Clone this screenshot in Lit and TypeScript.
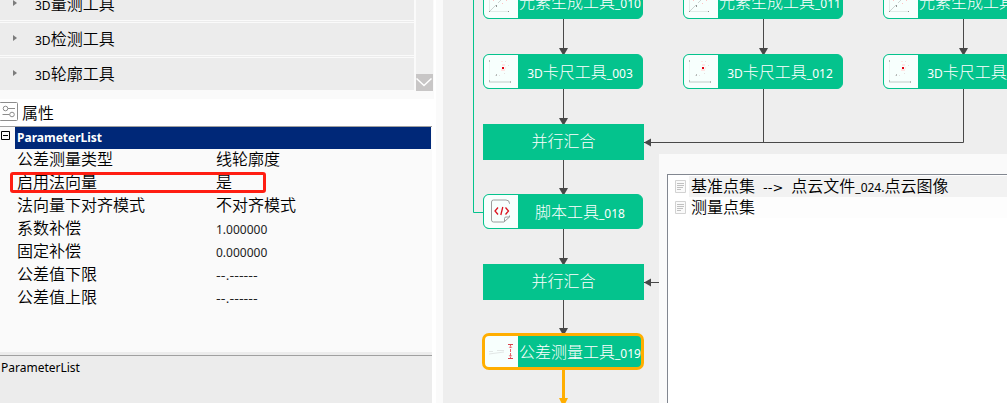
import { LitElement, html, css, svg } from "lit";
import { customElement, property } from "lit/decorators.js";
import { classMap } from "lit/directives/class-map.js";
import { styleMap } from "lit/directives/style-map.js";

/** Sets Latin runs in the smaller UI face, next to full-size Chinese text. */
const mixed = (text: string) =>
  text
    .split(/([\x21-\x7e]+)/)
    .filter((part) => part.trim() !== "")
    .map((part) =>
      /^[-.>]+$/.test(part) && part.length > 1
        ? html`<span class="latin dashes">${part}</span>`
        : /^[\x21-\x7e]/.test(part)
          ? html`<span class="latin">${part}</span>`
          : html`<span>${part}</span>`,
    );

const textStyles = css`
  :host,
  *,
  *::after {
    box-sizing: border-box;
  }
  .latin {
    font-family: "Noto Sans", sans-serif;
    font-size: 12px;
    font-weight: 400;
    line-height: 16px;
  }
  .dashes {
    font-family: "DejaVu Sans", sans-serif;
    font-size: 13px;
  }
`;

const pointIcon = svg`
  <path d="M5.500 6v21" stroke="#f0f6f4" />
  <path d="M5 27h21" stroke="#dce5e2" stroke-width="2" />
  <g fill="#b4bab8">
    <rect x="5" y="5" width="1" height="2" /><rect x="5" y="25" width="1" height="2" />
    <rect x="12" y="19" width="1" height="2" /><rect x="26" y="26" width="1" height="2" />
  </g>
  <g fill="#e4e2e1">
    <rect x="11" y="20" width="1" height="1" /><rect x="15" y="20" width="1" height="1" />
    <rect x="20" y="18" width="1" height="1" /><rect x="24" y="10" width="1" height="1" />
    <rect x="21" y="6" width="1" height="1" />
  </g>
  <g fill="#ffe4e4">
    <rect x="17" y="6" width="2" height="1" /><rect x="18" y="9" width="3" height="2" />
    <rect x="17" y="14" width="4" height="2" /><rect x="21" y="12" width="1" height="2" />
  </g>
  <rect x="18" y="12" width="2" height="2" fill="#e60012" />`;

const elementIcon = svg`
  <path d="M5.500 8v18M6 26.500h19" stroke="#e2ebe8" />
  <path d="M6 26l6-6M14 18l6-6" stroke="#ccd4d2" />
  <g fill="#8f9593">
    <rect x="12" y="20" width="1" height="2" /><rect x="24" y="26" width="1" height="1" />
    <rect x="5" y="26" width="1" height="1" />
  </g>
  <g fill="#ffc4c4">
    <rect x="9" y="15" width="1" height="1" /><rect x="18" y="18" width="1" height="1" />
    <rect x="22" y="15" width="1" height="1" />
  </g>`;

const scriptIcon = svg`
  <path d="M25.500 9V8.500q0-3.500-3.500-3.500H9.500a2 2 0 0 0-2 2v18a2 2 0 0 0 2 2H20l5.500-5V20.500M20.500 27v-3.500q0-1.500 1.500-1.500h3.500"
    fill="none" stroke="#9b9d9d" />
  <path d="M14 12.500l-3 3.500 3 3.500M21.500 12.500l3 3.500-3 3.500M18.800 12l-2 8" fill="none" stroke="#dc1420" stroke-width="1.300" />`;

const toleranceIcon = svg`
  <path d="M5 19l15-2M5 16.500h4M13 15.500h7" stroke="#e2e7e6" />
  <path d="M24 9.500h5M24 23.500h5" stroke="#d9434c" />
  <path d="M26.500 10v13" stroke="#e8606a" stroke-dasharray="3 1" />
  <path d="M25 13l1.500-2 1.500 2M25 20l1.500 2 1.500-2" fill="none" stroke="#f09aa0" />`;

const icons = {
  point: pointIcon,
  element: elementIcon,
  script: scriptIcon,
  tolerance: toleranceIcon,
};

interface FlowNodeData {
  x: number;
  y: number;
  label: string;
  icon?: keyof typeof icons;
  active?: boolean;
}

const nodes: FlowNodeData[] = [
  { x: 40, y: -16, label: "元素生成工具_010", icon: "element" },
  { x: 240, y: -16, label: "元素生成工具_011", icon: "element" },
  { x: 440, y: -16, label: "元素生成工具_012", icon: "element" },
  { x: 40, y: 54, label: "3D卡尺工具_003", icon: "point" },
  { x: 240, y: 54, label: "3D卡尺工具_012", icon: "point" },
  { x: 440, y: 54, label: "3D卡尺工具_013", icon: "point" },
  { x: 40, y: 124, label: "并行汇合" },
  { x: 40, y: 194, label: "脚本工具_018", icon: "script" },
  { x: 40, y: 264, label: "并行汇合" },
  { x: 40, y: 334, label: "公差测量工具_019", icon: "tolerance", active: true },
];

/** Tips of the downward arrows. */
const arrows = [
  [120, 54], [320, 54], [520, 54], [120, 124], [120, 194], [120, 264], [120, 334],
];

@customElement("flow-node")
class FlowNode extends LitElement {
  @property() label = "";
  @property() icon?: keyof typeof icons;
  @property({ type: Boolean }) active = false;

  static styles = [
    textStyles,
    css`
      :host {
        display: block;
      }
      .node {
        display: flex;
        width: 161px;
        height: 36px;
        background: #04c38d;
        color: #fff;
      }
      .tool {
        width: 160px;
        height: 35px;
        border: 1px solid #04c38d;
        border-radius: 6px;
        overflow: hidden;
      }
      .active {
        outline: 3px solid #ffae00;
        outline-offset: -2px;
      }
      .icon {
        flex: none;
        width: 34px;
        height: 33px;
        background: #f7fffd;
      }
      .label {
        flex: 1;
        display: flex;
        justify-content: center;
        align-items: baseline;
        white-space: nowrap;
        line-height: 32px;
      }
    `,
  ];

  render() {
    return html`<div class=${classMap({ node: true, tool: !!this.icon, active: this.active })}>
      ${this.icon
        ? html`<svg class="icon" viewBox="0 0 34 33" aria-hidden="true">${icons[this.icon]}</svg>`
        : null}
      <span class="label">${mixed(this.label)}</span>
    </div>`;
  }
}

@customElement("flow-canvas")
class FlowCanvas extends LitElement {
  static styles = [
    textStyles,
    css`
      :host {
        display: block;
        position: relative;
        overflow: hidden;
        background: #eee;
      }
      .edges {
        position: absolute;
        inset: 0;
        width: 100%;
        height: 100%;
      }
      .item {
        position: absolute;
        font-weight: 300;
      }
      .window {
        position: absolute;
        left: 216px;
        top: 154px;
        right: 0;
        bottom: 0;
        padding: 20px 0 0 8px;
        background: #fafafa;
      }
      .list {
        height: 100%;
        margin: 0;
        padding: 1px 0 0 7px;
        list-style: none;
        border: solid #828790;
        border-width: 1px 0 0 1px;
        background: #fff;
        color: #000;
      }
      .input {
        display: flex;
        align-items: center;
        gap: 3px;
        height: 21px;
      }
      .name {
        flex: 1;
        align-self: stretch;
        display: flex;
        align-items: baseline;
        gap: 8px;
        padding-left: 2px;
        line-height: 19px;
        white-space: nowrap;
        background: #fdfdfd;
      }
      .source {
        display: flex;
        align-items: baseline;
      }
      .selected .name {
        background: #f2f2f2;
      }
      .doc {
        flex: none;
      }
    `,
  ];

  private doc() {
    return html`<svg class="doc" width="11" height="14" viewBox="0 0 11 14" aria-hidden="true">
      <path d="M.5 .5h10v12H.5z" fill="#fafafa" stroke="#d2d2d2" />
      <path d="M2 3.500h7M2 5.500h7M2 7.500h6M2 9.500h4" stroke="#c0c0c0" />
    </svg>`;
  }

  render() {
    return html`
      <svg class="edges" aria-hidden="true">
        <path d="M30.500 0v212.500h10" fill="none" stroke="#04c38d" />
        <path
          d="M120.500 19v320M320.500 19v123M520.500 19v123.500H201M201 282.500h20"
          fill="none"
          stroke="#484848"
        />
        ${arrows.map(([x, y]) => svg`<path d="M${x - 4} ${y - 6}h9l-4 7h-1z" fill="#484848" />`)}
        <path d="M201 142.500l7-4v8zM201 282.500l7-4v8z" fill="#484848" />
        <path d="M120.500 369v40" stroke="#ffae00" stroke-width="3" />
        <path d="M116 398h9l-3 6h-3z" fill="#ffae00" />
      </svg>
      ${nodes.map(
        (n) => html`<flow-node
          class="item"
          style=${styleMap({ left: `${n.x}px`, top: `${n.y}px` })}
          .label=${n.label}
          .icon=${n.icon}
          .active=${!!n.active}
        ></flow-node>`,
      )}
      <section class="window">
        <ul class="list">
          <li class="input selected">
            ${this.doc()}
            <span class="name">
              <span>基准点集</span>
              ${mixed("-->")}
              <span class="source">${mixed("点云文件_024.点云图像")}</span>
            </span>
          </li>
          <li class="input">${this.doc()}<span class="name">测量点集</span></li>
        </ul>
      </section>
    `;
  }
}

@customElement("tool-tree")
class ToolTree extends LitElement {
  static styles = [
    textStyles,
    css`
      :host {
        display: flex;
        gap: 1px;
        height: 99px;
        padding: 0 1px 8px 0;
        overflow: hidden;
        background: #fafafa;
      }
      .groups {
        flex: 1;
        display: flex;
        flex-direction: column;
        justify-content: flex-end;
        gap: 1px;
        margin-right: 1px;
        background: #ececec;
      }
      .group {
        flex: none;
        display: flex;
        align-items: center;
        gap: 18px;
        height: 34px;
        padding: 0 0 2px 13px;
        border: solid #fafafa;
        border-width: 1px 0;
        background: #ececec;
        color: #000;
        font: inherit;
        text-align: left;
      }
      .title {
        display: flex;
        align-items: baseline;
      }
      .scroll {
        display: flex;
        flex-direction: column;
        justify-content: flex-end;
        width: 17px;
        background: #f0f0f0;
      }
      .down {
        display: flex;
        width: 17px;
        height: 17px;
        padding: 0;
        border: 0;
        background: #c8c6c6;
      }
    `,
  ];

  render() {
    return html`
      <div class="groups">
        ${["3D量测工具", "3D检测工具", "3D轮廓工具"].map(
          (t) => html`<button class="group" type="button">
            <svg width="4" height="6" viewBox="0 0 4 6" aria-hidden="true">
              <path d="M0 0l4 3-4 3z" fill="#7c7c7c" />
            </svg>
            <span class="title">${mixed(t)}</span>
          </button>`,
        )}
      </div>
      <div class="scroll">
        <button class="down" type="button" aria-label="向下滚动">
          <svg width="17" height="17" viewBox="0 0 17 17" aria-hidden="true">
            <path d="M.5 4.500l7.500 7 7.500-7" fill="none" stroke="#fff" stroke-width="1.500" />
          </svg>
        </button>
      </div>
    `;
  }
}

const parameters = [
  { name: "公差测量类型", value: "线轮廓度" },
  { name: "启用法向量", value: "是", marked: true },
  { name: "法向量下对齐模式", value: "不对齐模式" },
  { name: "系数补偿", value: "1.000000" },
  { name: "固定补偿", value: "0.000000" },
  { name: "公差值下限", value: "--.------" },
  { name: "公差值上限", value: "--.------" },
];

@customElement("property-panel")
class PropertyPanel extends LitElement {
  static styles = [
    textStyles,
    css`
      :host {
        display: flex;
        flex-direction: column;
        background: #fff;
        color: #000;
      }
      .heading {
        display: flex;
        align-items: center;
        gap: 3px;
        height: 27px;
        margin: 0;
        padding-bottom: 2px;
        font-size: 16px;
        font-weight: inherit;
        line-height: 24px;
      }
      .grid {
        flex: 1;
        margin-right: 2px;
        border-top: 1px solid #a0a0a0;
        background: #fafafa;
      }
      .category {
        display: flex;
        height: 22px;
        margin-right: 1px;
      }
      .toggle {
        display: flex;
        width: 15px;
        padding: 4px 0 0 1px;
        border: 0;
        background: none;
      }
      .caption {
        flex: 1;
        padding-left: 2px;
        background: #002878;
        color: #fff;
        font: 700 12px/22px "Noto Sans", sans-serif;
      }
      .rows {
        width: 100%;
        border-collapse: collapse;
        table-layout: fixed;
      }
      .row {
        position: relative;
        height: 23px;
      }
      .name,
      .value {
        padding: 0;
        font-weight: inherit;
        line-height: 19px;
        text-align: left;
        vertical-align: top;
        white-space: nowrap;
      }
      .name {
        width: 216px;
        padding-left: 17px;
      }
      .value .latin {
        color: #222;
      }
      .marked::after {
        content: "";
        position: absolute;
        left: 10px;
        top: 0;
        width: 256px;
        height: 21px;
        border: 3px solid #ff1e12;
        border-radius: 3px;
      }
      .help {
        height: 51px;
        margin: 0 2px 0 0;
        padding-top: 3px;
        background: #ececec;
      }
      .hint {
        display: block;
        height: 48px;
        padding: 4px 1px;
        border-top: 1px solid #a0a0a0;
      }
    `,
  ];

  render() {
    return html`
      <h2 class="heading">
        <svg width="19" height="19" viewBox="0 0 19 19" fill="none" stroke="#8c8c8c" aria-hidden="true">
          <rect x="-.5" y=".5" width="18" height="18" rx="1" />
          <circle cx="5.500" cy="6.500" r="2.300" /><path d="M8 6.500h7" />
          <circle cx="12" cy="12.500" r="2.300" /><path d="M2.500 12.500h7" />
        </svg>
        <span>属性</span>
      </h2>
      <div class="grid">
        <div class="category">
          <button class="toggle" type="button" aria-label="折叠">
            <svg width="9" height="9" viewBox="0 0 9 9" fill="none" stroke="#000" aria-hidden="true">
              <path d="M.5 .5h8v8h-8zM2 4.500h5" />
            </svg>
          </button>
          <span class="caption">ParameterList</span>
        </div>
        <table class="rows">
          <tbody>
            ${parameters.map(
              (p) => html`<tr class=${classMap({ row: true, marked: !!p.marked })}>
                <th class="name" scope="row">${p.name}</th>
                <td class="value">${mixed(p.value)}</td>
              </tr>`,
            )}
          </tbody>
        </table>
      </div>
      <footer class="help"><span class="hint latin">ParameterList</span></footer>
    `;
  }
}

@customElement("app-root")
class AppRoot extends LitElement {
  static styles = css`
    :host {
      display: flex;
      height: 100vh;
      overflow: hidden;
      background: #fafafa;
      font: 350 16px "Noto Sans CJK SC", sans-serif;
    }
    .side {
      box-sizing: border-box;
      flex: none;
      display: flex;
      flex-direction: column;
      width: 436px;
      padding-right: 2px;
      background: #fff;
    }
    .properties {
      flex: 1;
    }
    .canvas {
      flex: 1;
      margin-left: 7px;
    }
  `;

  render() {
    return html`
      <aside class="side">
        <tool-tree></tool-tree>
        <property-panel class="properties"></property-panel>
      </aside>
      <flow-canvas class="canvas"></flow-canvas>
    `;
  }
}
